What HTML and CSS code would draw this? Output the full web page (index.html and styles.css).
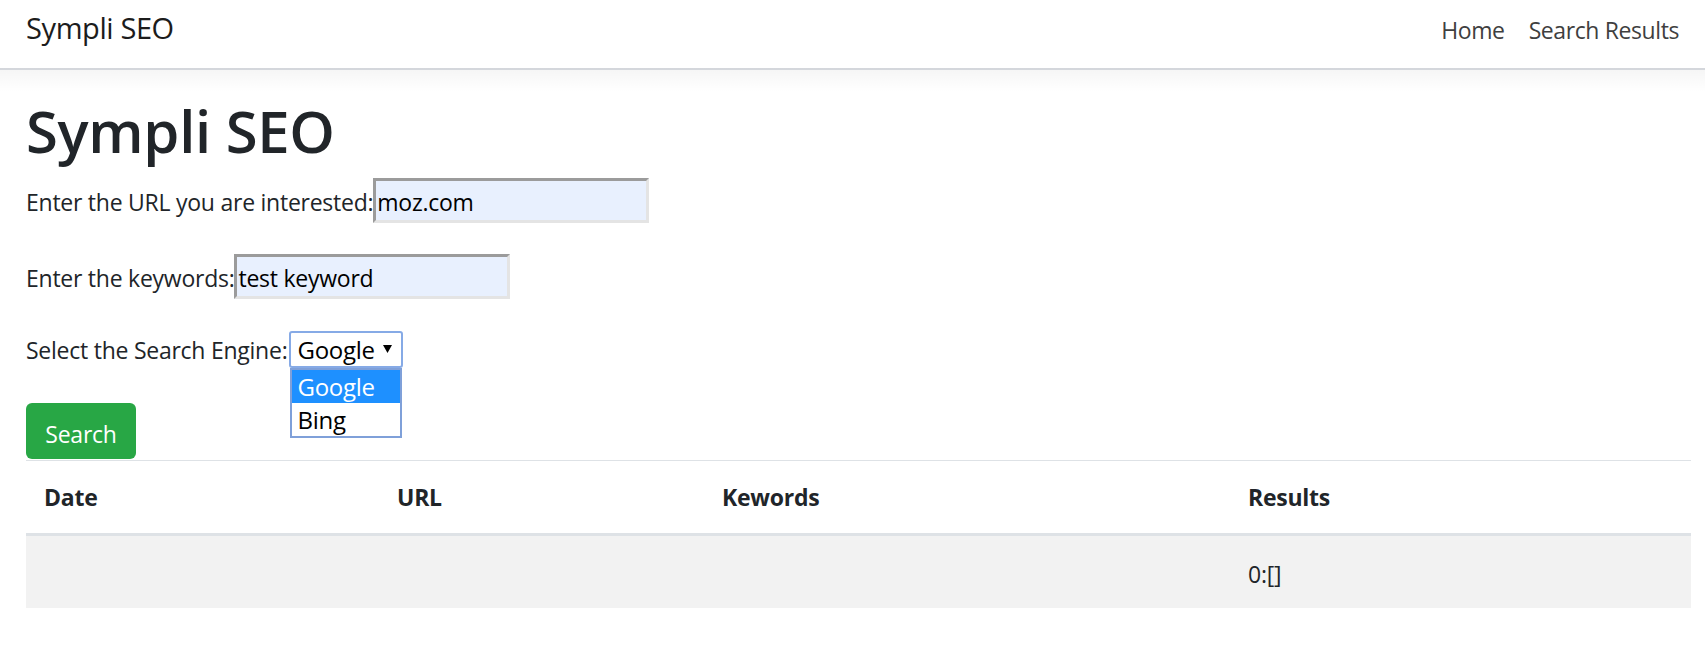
FILE: index.html
```html
<!DOCTYPE html>
<html lang="en">
<head>
<meta charset="utf-8">
<title>Sympli SEO</title>
<link rel="stylesheet" href="styles.css">
</head>
<body>
<nav class="navbar">
  <a class="brand" href="#">Sympli SEO</a>
  <ul class="nav-links">
    <li><a href="#">Home</a></li>
    <li><a href="#">Search Results</a></li>
  </ul>
</nav>
<main class="container">
  <h1 class="title">Sympli SEO</h1>
  <form class="search-form">
    <div class="field field-url">
      <label class="field-label">Enter the URL you are interested:</label>
      <input class="text-input" type="text" value="moz.com">
    </div>
    <div class="field field-kw">
      <label class="field-label">Enter the keywords:</label>
      <input class="text-input" type="text" value="test keyword">
    </div>
    <div class="field field-engine">
      <label class="field-label">Select the Search Engine:</label>
      <div class="select-wrap">
        <div class="select">
          <span class="select-value">Google</span>
          <svg class="select-arrow" width="9" height="8" viewBox="0 0 9 8"><path d="M0 0 H9 L4.5 8 Z" fill="#000"/></svg>
        </div>
        <ul class="listbox">
          <li class="option option-active">Google</li>
          <li class="option">Bing</li>
        </ul>
      </div>
    </div>
    <button class="btn-search" type="button">Search</button>
  </form>
  <table class="results">
    <colgroup>
      <col class="col-date">
      <col class="col-url">
      <col class="col-kw">
      <col class="col-res">
    </colgroup>
    <thead>
      <tr><th>Date</th><th>URL</th><th>Kewords</th><th>Results</th></tr>
    </thead>
    <tbody>
      <tr class="striped"><td></td><td></td><td></td><td>0:[]</td></tr>
    </tbody>
  </table>
</main>
</body>
</html>
```
FILE: styles.css
```css
* { box-sizing: border-box; }

html, body {
  margin: 0;
  padding: 0;
  background: #fff;
}

body {
  font-family: "Open Sans", "Noto Sans", sans-serif;
  font-size: 23px;
  line-height: 36px;
  letter-spacing: -0.25px;
  color: #212529;
}

.navbar {
  position: relative;
  display: flex;
  align-items: baseline;
  height: 70px;
  padding: 6px 14px 0 26px;
  background: #fff;
  border-bottom: 2px solid #dcdfe4;
}

.navbar::after {
  content: "";
  position: absolute;
  left: 0;
  right: 0;
  top: 100%;
  height: 24px;
  background: linear-gradient(to bottom, rgba(0, 0, 0, 0.04), rgba(0, 0, 0, 0));
  pointer-events: none;
}

.brand {
  font-size: 29px;
  line-height: 44px;
  letter-spacing: -0.4px;
  color: #1c1c1c;
  text-decoration: none;
}

.nav-links {
  display: flex;
  margin: 0 0 0 auto;
  padding: 0;
  list-style: none;
}

.nav-links a {
  display: block;
  padding: 0 12px;
  color: #3f3f3f;
  text-decoration: none;
  font-size: 23px;
  line-height: 36px;
  letter-spacing: -0.4px;
}

.container {
  padding: 0 14px 0 26px;
}

.title {
  margin: 26px 0 12px;
  font-size: 58px;
  line-height: 70px;
  font-weight: 600;
  letter-spacing: -0.3px;
  color: #212529;
}

.search-form {
  margin: 0;
}

.field {
  display: flex;
  align-items: baseline;
}

.field-kw { margin-top: 31px; }
.field-engine { margin-top: 32px; }

.field-label {
  white-space: nowrap;
}

.text-input {
  width: 276px;
  height: 45px;
  margin: 0;
  padding: 2px 1px 0;
  font-family: inherit;
  font-size: 23px;
  letter-spacing: -0.25px;
  color: #000;
  background: #e8f0fe;
  border-style: solid;
  border-width: 3px;
  border-color: #9b9b9b #e4e4e4 #e4e4e4 #9b9b9b;
  outline: none;
}

.select-wrap {
  position: relative;
  margin-left: 2px;
}

.select {
  display: flex;
  align-items: flex-start;
  width: 114px;
  height: 37px;
  padding: 0 9px 0 6px;
  border: 2px solid #86aae6;
  border-radius: 3px;
  line-height: 33px;
  font-size: 24px;
  color: #000;
  background: #fff;
}

.select-arrow {
  margin: 12px 0 0 auto;
}

.listbox {
  position: absolute;
  left: 1px;
  top: 37px;
  width: 112px;
  margin: 0;
  padding: 0;
  list-style: none;
  background: #fff;
  border: 2px solid #7fa0d9;
  z-index: 5;
}

.option {
  height: 33px;
  padding-left: 5px;
  line-height: 33px;
  font-size: 24px;
  color: #000;
}

.option-active {
  background: #1e90ff;
  color: #fff;
}

.btn-search {
  display: block;
  width: 110px;
  height: 56px;
  margin-top: 35px;
  padding: 13px 0 7px;
  font-family: inherit;
  font-size: 23px;
  line-height: 36px;
  letter-spacing: -0.25px;
  color: #fff;
  background: #28a745;
  border: 0;
  border-radius: 6px;
  text-align: center;
}

.results {
  width: 100%;
  margin-top: 1px;
  border-collapse: collapse;
  table-layout: fixed;
}

.col-date { width: 353px; }
.col-url { width: 325px; }
.col-kw { width: 526px; }

.results th {
  padding: 18px;
  text-align: left;
  font-weight: 700;
  line-height: 36px;
  border-top: 1px solid #dee2e6;
  border-bottom: 3px solid #dee2e6;
}

.results td {
  padding: 20px 18px 16px;
  line-height: 36px;
}

.striped {
  background: #f2f2f2;
}
```
